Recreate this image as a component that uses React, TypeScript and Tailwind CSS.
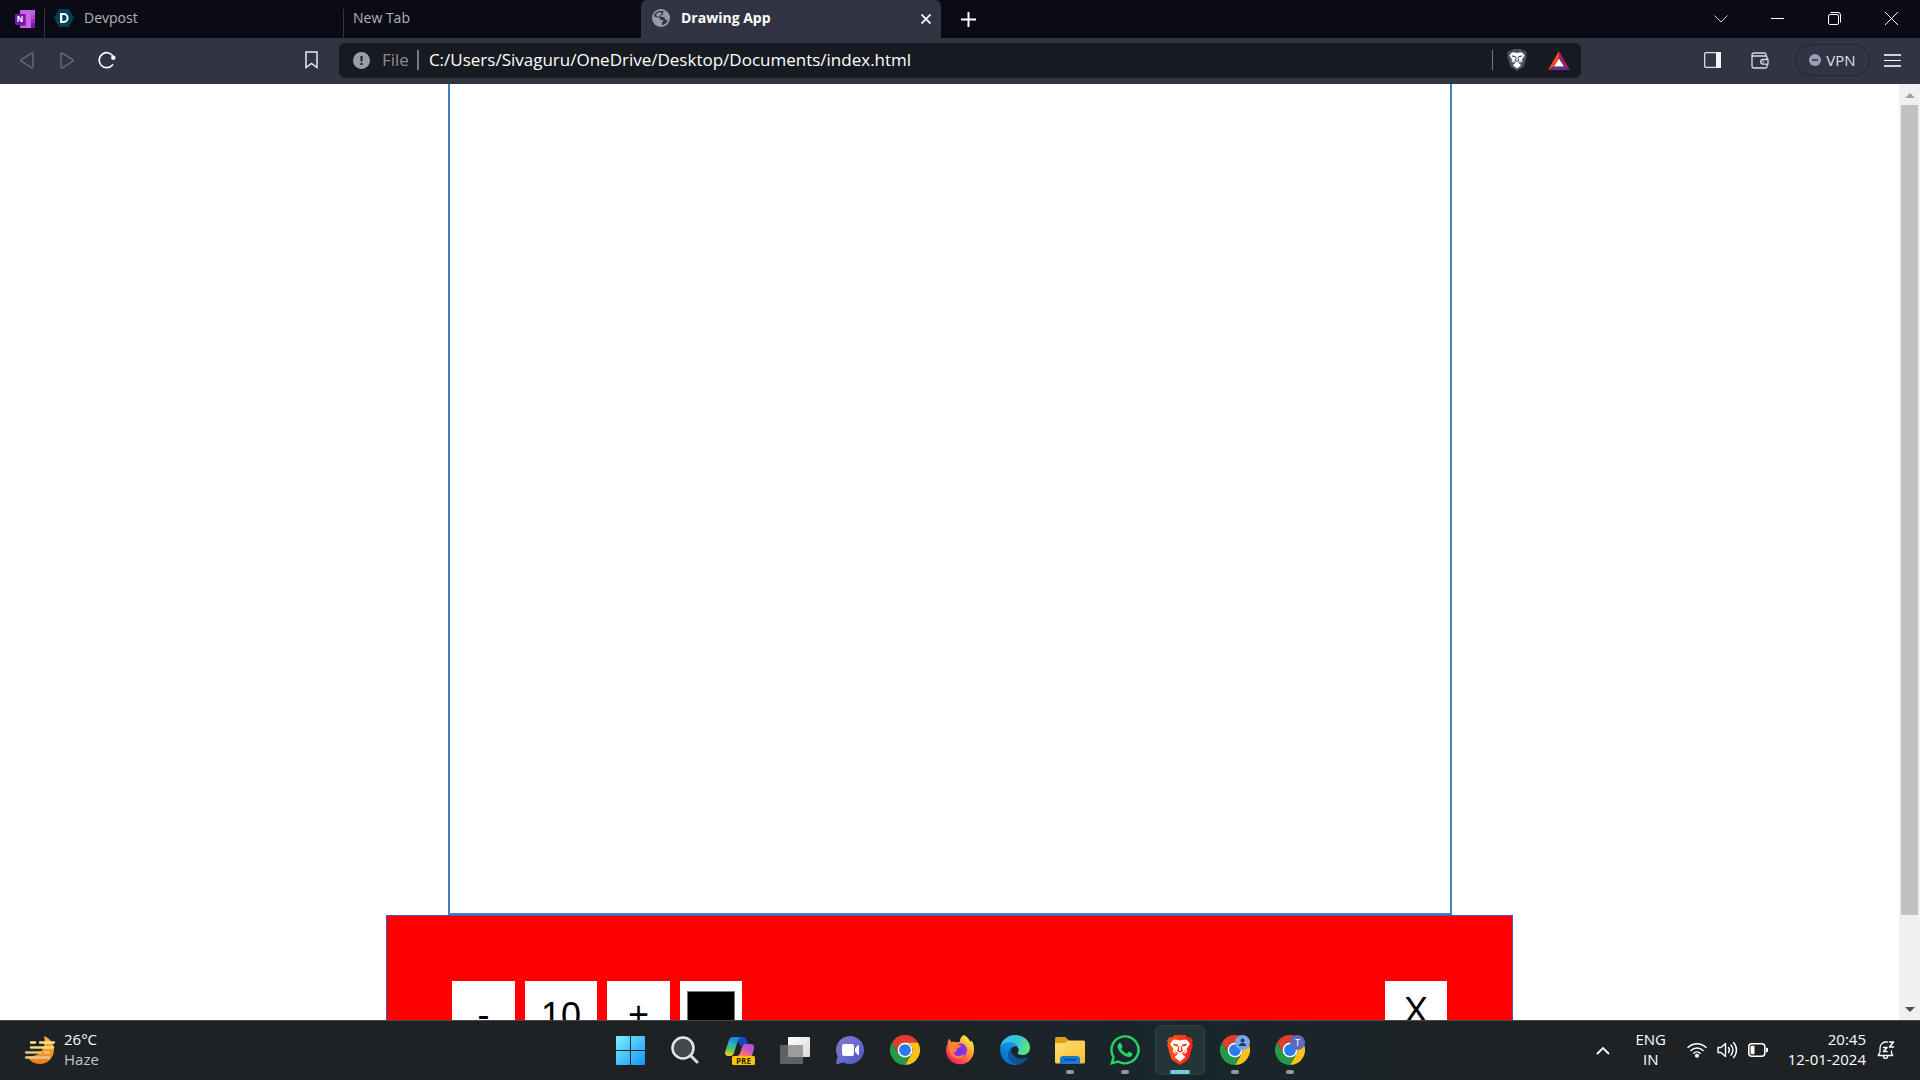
import React from "react";
import { FaWhatsapp } from "react-icons/fa";

function OneNoteIcon() {
  return (
    <svg width="20" height="18" viewBox="0 0 20 18">
      <rect x="5" y="0" width="15" height="18" rx="1" fill="#ca64ea" />
      <rect x="16" y="0" width="4" height="5" fill="#c45be8" />
      <rect x="16" y="5" width="4" height="4" fill="#ae4bd5" />
      <rect x="16" y="9" width="4" height="4" fill="#9332bf" />
      <rect x="16" y="13" width="4" height="5" fill="#7719aa" />
      <rect x="5" y="4" width="6" height="12" fill="#8a2fae" />
      <rect x="0" y="4" width="10" height="11" rx="1" fill="#7719aa" />
      <text x="5" y="12" textAnchor="middle" fontSize="8" fontWeight="700" fill="#fff" fontFamily="Open Sans, sans-serif">N</text>
    </svg>
  );
}

function DevpostIcon() {
  return (
    <svg width="20" height="18" viewBox="0 0 20 18">
      <path d="M5 0h10l5 9-5 9H5L0 9z" fill="#003e54" />
      <path d="M6 4h3.600a5 5 0 0 1 0 10H6zM8.300 6v6h1.300a3 3 0 0 0 0-6z" fill="#fff" fillRule="evenodd" />
    </svg>
  );
}

function GlobeIcon() {
  return (
    <svg width="18" height="18" viewBox="0 0 18 18">
      <circle cx="9" cy="9" r="9" fill="#9a9ca5" />
      <path d="M8 2C5 2 2.500 4 2 7.500L6 8.500c2 .3 2.500 1 2.500 2.500l3 .2c0 1.300-1 1.600-1.500 2l-.3 2.800c2.500 0 5-1.600 6-4.500L13 10.500 12.500 8H9V6h2V3.500l1.500-.8C11 2 9 2 8 2z" fill="#323443" />
      <path d="M5.500 3.500h4V5L8 6.500 7 8 4 6.500zM12 5l3 1-1 2-2.500-1z" fill="#9a9ca5" />
    </svg>
  );
}

function ChromeIcon({ badge }: { badge?: "person" | "letter" }) {
  return (
    <svg width="30" height="30" viewBox="0 0 24 24">
      <path d="M12 6H22.4A12 12 0 0 0 1.6 6L6.8 15A6 6 0 0 1 12 6Z" fill="#e33b2e" />
      <path d="M12 6H22.4A12 12 0 0 1 12 24L17.2 15A6 6 0 0 0 12 6Z" fill="#fcc21b" />
      <path d="M1.6 6A12 12 0 0 0 12 24L17.2 15A6 6 0 0 1 6.8 15Z" fill="#229a48" />
      <circle cx="12" cy="12" r="6" fill="#fff" />
      <circle cx="12" cy="12" r="4.7" fill="#2a7af0" />
      {badge === "person" && (
        <g>
          <circle cx="18" cy="6" r="6" fill="#7ba7e8" />
          <circle cx="18" cy="4.400" r="1.600" fill="#1c3a66" />
          <path d="M15 8.800c0-1.700 1.400-2.400 3-2.400s3 .7 3 2.400z" fill="#1c3a66" />
        </g>
      )}
      {badge === "letter" && (
        <g>
          <circle cx="18" cy="6" r="6" fill="#5c6bc0" />
          <text x="18" y="8.600" textAnchor="middle" fontSize="7" fill="#fff" fontFamily="Roboto, sans-serif">T</text>
        </g>
      )}
    </svg>
  );
}

function WindowsIcon() {
  return (
    <svg width="29" height="29" viewBox="0 0 29 29">
      <defs>
        <linearGradient id="win" x1="0" y1="0" x2="29" y2="29" gradientUnits="userSpaceOnUse">
          <stop offset="0" stopColor="#7af0ff" />
          <stop offset="1" stopColor="#1296f5" />
        </linearGradient>
      </defs>
      <path d="M1 0h13v14H0V1a1 1 0 0 1 1-1zM15 0h13a1 1 0 0 1 1 1v13H15zM0 15h14v14H1a1 1 0 0 1-1-1zM15 15h14v13a1 1 0 0 1-1 1H15z" fill="url(#win)" />
    </svg>
  );
}

function SearchIcon() {
  return (
    <svg width="28" height="28" viewBox="0 0 28 28">
      <path d="M19 19l7 7" stroke="#d9dcde" strokeWidth="3" strokeLinecap="round" />
      <circle cx="12" cy="12" r="10.500" fill="#43484b" stroke="#e4e6e7" strokeWidth="2.500" />
    </svg>
  );
}

function CopilotIcon() {
  return (
    <svg width="30" height="29" viewBox="0 0 30 29">
      <defs>
        <linearGradient id="cpa" x1="0.500" y1="0" x2="0.300" y2="1">
          <stop offset="0" stopColor="#1587e8" />
          <stop offset="0.400" stopColor="#2fb1b8" />
          <stop offset="0.700" stopColor="#6cc04a" />
          <stop offset="1" stopColor="#f5d02b" />
        </linearGradient>
        <linearGradient id="cpb" x1="0.800" y1="0" x2="0.200" y2="1">
          <stop offset="0" stopColor="#a24ff0" />
          <stop offset="0.500" stopColor="#d658b4" />
          <stop offset="1" stopColor="#ff8a4c" />
        </linearGradient>
      </defs>
      <path d="M9 1h9c2 0 3 1 3.600 3l1.200 4h-3c-2 0-3.200.8-3.800 3L14 7z" fill="#124bc4" />
      <path d="M8 1h8c-2 1-3 3-3.600 5L9 17c-.6 2-2 3-4 3H3c-2.500 0-3.500-2-2.700-4.500L4 4c.6-2 2-3 4-3z" fill="url(#cpa)" />
      <path d="M20 8h6c2.500 0 3.600 2 3 4.500L27 20H12c2-.5 2.800-2 3.200-3.500L17.500 10c.5-1.300 1.300-2 2.500-2z" fill="url(#cpb)" />
      <rect x="7" y="20" width="23" height="9" rx="1.500" fill="#ffc505" />
      <text x="18.500" y="27.500" textAnchor="middle" fontSize="8" fontWeight="700" fill="#2a2208" fontFamily="Open Sans, sans-serif">PRE</text>
    </svg>
  );
}

function TaskViewIcon() {
  return (
    <svg width="30" height="27" viewBox="0 0 30 27">
      <defs>
        <linearGradient id="tv" x1="0" y1="0" x2="1" y2="1">
          <stop offset="0" stopColor="#fff" />
          <stop offset="1" stopColor="#d8d8d8" />
        </linearGradient>
      </defs>
      <rect x="0" y="8" width="23" height="19" rx="1" fill="#5f6263" />
      <rect x="8" y="0" width="22" height="20" rx="1" fill="url(#tv)" />
      <path d="M8 8h15v12H8z" fill="#9b9c9c" />
    </svg>
  );
}

function ChatIcon() {
  return (
    <svg width="28" height="28" viewBox="0 0 28 28">
      <defs>
        <linearGradient id="chat" x1="0" y1="0" x2="1" y2="1">
          <stop offset="0" stopColor="#9a72b8" />
          <stop offset="0.400" stopColor="#6a6fd0" />
          <stop offset="1" stopColor="#4f56c4" />
        </linearGradient>
      </defs>
      <path d="M14 0a14 14 0 1 1-6.500 26.400L1.500 28c-.9.200-1.600-.5-1.300-1.400L1.600 20.500A14 14 0 0 1 14 0z" fill="url(#chat)" />
      <rect x="6" y="8" width="12" height="12" rx="2" fill="#fff" />
      <path d="M19 12.500l3-3.500h1v10h-1l-3-3.500z" fill="#fff" />
    </svg>
  );
}

function FirefoxIcon() {
  return (
    <svg width="30" height="30" viewBox="0 0 30 30">
      <defs>
        <linearGradient id="ffx" x1="26" y1="3" x2="5" y2="27" gradientUnits="userSpaceOnUse">
          <stop offset="0" stopColor="#fff44f" />
          <stop offset="0.300" stopColor="#ffb02e" />
          <stop offset="0.600" stopColor="#ff6a3d" />
          <stop offset="1" stopColor="#f0186e" />
        </linearGradient>
        <radialGradient id="ffc">
          <stop offset="0" stopColor="#5a3af0" />
          <stop offset="1" stopColor="#a42ee0" />
        </radialGradient>
      </defs>
      <path d="M19 0c3.500 1.500 5 4.500 6.500 7l1-1.500c1.800 2.500 2.700 6 2.500 9.500A14 14 0 1 1 2.500 9C2.700 6.500 3.300 5 4.500 3.500L6 7c1-.4 2.500-.4 4 0 1.800.3 3.500.3 5-.2C14.500 4 16.500 1 19 0z" fill="url(#ffx)" />
      <path d="M13.500 8.500a7 7 0 1 1-5 9l-.5-3 4-2z" fill="url(#ffc)" />
      <path d="M3.500 9.500c3-2 6 .2 9 .6 1.500.3 3.500.2 3.500 1.200s-3 1.300-4 2.300c-.8 1 0 2.500-1.200 3.200-1 .6-2 .3-2.300-.4-.3 3 2 4.700 4.800 4.700 3 0 4.200-2 6-1.600-1 2.500-3.500 4-6.500 4C8 23.500 3 19 3.500 9.500z" fill="#ff7f36" />
    </svg>
  );
}

function EdgeIcon() {
  return (
    <svg width="30" height="30" viewBox="0 0 256 256">
      <defs>
        <linearGradient id="ed1" x1="60" y1="170" x2="236" y2="180" gradientUnits="userSpaceOnUse">
          <stop offset="0" stopColor="#0c59a4" />
          <stop offset="1" stopColor="#114a8b" />
        </linearGradient>
        <linearGradient id="ed2" x1="150" y1="80" x2="40" y2="230" gradientUnits="userSpaceOnUse">
          <stop offset="0" stopColor="#1b9de2" />
          <stop offset="0.500" stopColor="#1383d8" />
          <stop offset="1" stopColor="#0a6cc8" />
        </linearGradient>
        <linearGradient id="ed3" x1="20" y1="40" x2="250" y2="130" gradientUnits="userSpaceOnUse">
          <stop offset="0" stopColor="#35c1f1" />
          <stop offset="0.500" stopColor="#36c6d7" />
          <stop offset="1" stopColor="#66eb6e" />
        </linearGradient>
      </defs>
      <path fill="url(#ed1)" d="M231.05 190.54c-3.37 1.76-6.86 3.3-10.44 4.6a101.2 101.2 0 0 1-35.62 6.33c-46.94 0-87.83-32.29-87.83-73.72.13-11.31 6.35-21.67 16.26-27.13-42.46 1.79-53.37 46.03-53.37 71.95 0 73.28 67.54 80.71 82.09 80.71 7.85 0 19.69-2.28 26.8-4.52l1.3-.44a128.43 128.43 0 0 0 66.62-52.8 4 4 0 0 0-5.81-4.98z" />
      <path fill="url(#ed2)" d="M105.73 241.42a79.2 79.2 0 0 1-22.74-21.34A80.72 80.72 0 0 1 113.4 100.62c3.15-1.48 8.53-4.16 15.68-4.03a32.35 32.35 0 0 1 25.69 13.02 31.88 31.88 0 0 1 6.36 18.66c0-.21 24.46-79.6-80-79.6-43.9 0-80 41.65-80 78.21a130.15 130.15 0 0 0 12.11 56.01 128 128 0 0 0 156.38 67.11 75.55 75.55 0 0 1-62.78-8.58z" />
      <path fill="url(#ed3)" d="M152.33 148.86c-.81 1.05-3.3 2.5-3.3 5.66 0 2.61 1.7 5.13 4.72 7.23 14.38 10 41.49 8.68 41.56 8.68a59.56 59.56 0 0 0 30.27-8.35A61.38 61.38 0 0 0 256 109.18c.26-22.41-8-37.31-11.34-43.91C223.46 23.84 177.72 0 128 0A128 128 0 0 0 0 126.2c.48-36.54 36.8-66.05 80-66.05 3.5 0 23.46.34 42 10.07 16.34 8.58 24.9 18.94 30.85 29.21 6.18 10.67 7.28 24.15 7.28 29.52 0 5.37-2.74 13.33-7.8 19.91z" />
    </svg>
  );
}

function FolderIcon() {
  return (
    <svg width="30" height="27" viewBox="0 0 30 27">
      <defs>
        <linearGradient id="fold" x1="0" y1="0" x2="1" y2="1">
          <stop offset="0" stopColor="#ffdf72" />
          <stop offset="1" stopColor="#f9bf2c" />
        </linearGradient>
      </defs>
      <path d="M0 1.500C0 .7.700 0 1.500 0h8c.6 0 1 .2 1.500.6L14 3.500v4H0z" fill="#dda10f" />
      <path d="M0 6h10l3-2.500h15.500c.8 0 1.500.7 1.500 1.500v20c0 .8-.7 1.500-1.500 1.500h-27C.7 26.500 0 25.800 0 25z" fill="url(#fold)" />
      <path d="M5 27v-4.500c0-2 1-3.500 3-3.500h14c2 0 3 1.500 3 3.500V27z" fill="#1679cf" />
      <rect x="9" y="22" width="12" height="1.500" rx="0.700" fill="#0b4a8c" />
    </svg>
  );
}

function BraveIcon({ muted }: { muted?: boolean }) {
  const fill = muted ? "#4a4d63" : "url(#brave)";
  return (
    <svg width={muted ? 20 : 26} height={muted ? 22 : 30} viewBox="0 0 26 30" preserveAspectRatio="none">
      <defs>
        <linearGradient id="brave" x1="0" y1="0" x2="26" y2="0" gradientUnits="userSpaceOnUse">
          <stop offset="0" stopColor="#fb5a1c" />
          <stop offset="1" stopColor="#fb1e10" />
        </linearGradient>
      </defs>
      <path d="M7.500 0h11l2.300 2.500 2.700-.3L26 5.500l-1 2.300.7 2.200-3.500 12.500c-.5 1.500-1.500 2.500-3 3.500L13 30l-6.200-4c-1.500-1-2.500-2-3-3.500L.3 10 1 7.800 0 5.500l2.500-3.300 2.700.3z" fill={fill} />
      <path d="M8.500 4.500l4.500 1 4.500-1L20 5l3 4-3.500 5 .8 2.200-1.300 1.800-3.500 1.500L18.500 22 13 26.500 7.500 22l3-2.500L7 18l-1.300-1.800.8-2.200L3 9l3-4z" fill="#fff" />
      <path d="M6 8.500l5.500 1.300-.8 1.700-3.700-.8zM20 8.500l-5.500 1.300.8 1.700 3.700-.8zM11.500 11h.8l-.4 4.500 1.100.7 1.100-.7-.4-4.500h.8l1.500 5-3 1.700-3-1.700zM6.500 14.500l3 2.500 2.500 2.500-2.500-.7zM19.500 14.500l-3 2.500-2.500 2.500 2.500-.7z" fill={fill} />
    </svg>
  );
}

function WeatherIcon() {
  return (
    <svg width="30" height="28" viewBox="0 0 30 28">
      <defs>
        <linearGradient id="moon" x1="0" y1="0" x2="0" y2="1">
          <stop offset="0" stopColor="#f9b43a" />
          <stop offset="1" stopColor="#ef7d16" />
        </linearGradient>
      </defs>
      <path d="M19 0c6 2.500 10 7.500 10 13.500C29 22 22.500 28 15 28c-6 0-10.500-3-12.500-8C14 22 22 12 19 0z" fill="url(#moon)" />
      <g strokeLinecap="round" strokeWidth="2.400">
        <path d="M6 6.500h4M15 6.500h14" stroke="#fbe08c" />
        <path d="M6 11.500h22" stroke="#fad67a" />
        <path d="M1 16.500h15M20 16.500h4" stroke="#e9c27b" />
        <path d="M1 21.500h23" stroke="#e2c896" />
      </g>
    </svg>
  );
}

const tabText = "text-sm leading-5 whitespace-nowrap";

function TabStrip() {
  return (
    <header className="flex h-[38px] shrink-0 bg-[#0b0b15] text-[#b3b4b9]">
      <nav className="flex min-w-0" aria-label="Tabs">
        <button aria-label="OneNote" className="flex w-11 items-center pl-[15px]">
          <OneNoteIcon />
        </button>
        <div className="mt-[9px] w-px shrink-0 bg-[#36363c]" />
        <button className="flex w-[298px] items-center gap-[10px] pb-[2px] pl-[9px]">
          <DevpostIcon />
          <span className={tabText}>Devpost</span>
        </button>
        <div className="mt-[9px] w-px shrink-0 bg-[#36363c]" />
        <button className="flex w-[297px] items-center pb-[2px] pl-[9px]">
          <span className={tabText}>New Tab</span>
        </button>
        <div className="flex w-[300px] items-center rounded-t-md bg-[#323443] pr-[7px] pl-[11px] text-white">
          <button className="flex flex-1 items-center gap-[11px] pb-[2px]">
            <GlobeIcon />
            <span className="text-sm leading-5 font-bold whitespace-nowrap">Drawing App</span>
          </button>
          <button aria-label="Close tab" className="flex h-5 w-4 items-center justify-center">
            <svg width="10" height="10" viewBox="0 0 10 10" stroke="#fff" strokeWidth="1.800">
              <path d="M0.500 0.500l9 9M9.500 0.500l-9 9" />
            </svg>
          </button>
        </div>
        <button aria-label="New tab" className="flex w-[55px] items-center justify-center">
          <svg width="15" height="15" viewBox="0 0 15 15" stroke="#fff" strokeWidth="2">
            <path d="M7.500 0v15M0 7.500h15" />
          </svg>
        </button>
      </nav>
      <div className="ml-auto flex pb-px">
        <button aria-label="Search tabs" className="flex w-[57px] items-center justify-center">
          <svg width="14" height="8" viewBox="0 0 14 8" fill="none" stroke="#d0d0d3"><path d="M.5.5L7 7l6.500-6.500" /></svg>
        </button>
        <button aria-label="Minimize" className="flex w-[57px] items-center justify-center">
          <span className="h-px w-[13px] bg-white" />
        </button>
        <button aria-label="Restore" className="flex w-[57px] items-center justify-center">
          <svg width="13" height="13" viewBox="0 0 13 13" fill="none" stroke="#fff">
            <rect x="0.500" y="2.500" width="10" height="10" rx="1.500" />
            <path d="M2.500.5H10A2.500 2.500 0 0 1 12.500 3v7.500" />
          </svg>
        </button>
        <button aria-label="Close" className="flex w-[57px] items-center justify-center">
          <svg width="13" height="13" viewBox="0 0 13 13" stroke="#fff"><path d="M0 0l13 13M13 0L0 13" /></svg>
        </button>
      </div>
    </header>
  );
}

const toolSlot = "flex h-10 w-10 items-center justify-center";

function Toolbar() {
  return (
    <div className="flex h-[46px] shrink-0 items-center bg-[#323443] pb-[2px]">
      <div className="flex w-[339px] shrink-0 items-center pr-2 pl-[7px]">
        <button aria-label="Back" className={toolSlot}>
          <svg width="14" height="17" viewBox="0 0 14 17" fill="none" stroke="#666874" strokeWidth="1.500" strokeLinejoin="round">
            <path d="M13 2v13c0 1-1 1.400-1.800.7L1.200 9.200c-.5-.4-.5-1 0-1.400l10-6.500C12 .7 13 1 13 2z" />
          </svg>
        </button>
        <button aria-label="Forward" className={toolSlot}>
          <svg width="14" height="17" viewBox="0 0 14 17" fill="none" stroke="#666874" strokeWidth="1.500" strokeLinejoin="round">
            <path d="M1 2v13c0 1 1 1.400 1.800.7l10-6.500c.5-.4.5-1 0-1.400l-10-6.500C2 .7 1 1 1 2z" />
          </svg>
        </button>
        <button aria-label="Reload" className={toolSlot}>
          <svg width="18" height="18" viewBox="0 0 18 18" fill="none" stroke="#fff" strokeWidth="1.700">
            <path d="M14.500 14A7.500 7.500 0 1 1 15.500 6" strokeLinecap="round" />
            <circle cx="15.300" cy="6.800" r="2.200" fill="#fff" stroke="none" />
          </svg>
        </button>
        <button aria-label="Bookmark" className="ml-auto flex h-10 w-10 items-center justify-center">
          <svg width="13" height="18" viewBox="0 0 13 18" fill="none" stroke="#e8e8ea" strokeWidth="1.500">
            <path d="M1 1h11v15.500l-5.500-4-5.500 4z" />
          </svg>
        </button>
      </div>
      <div className="flex h-[35px] min-w-0 flex-1 items-center rounded-md bg-[#181a21] pr-[11px] pl-[14px]">
        <svg width="17" height="17" viewBox="0 0 17 17" className="shrink-0">
          <circle cx="8.500" cy="8.500" r="8.500" fill="#9a9ca8" />
          <path d="M7.500 4h2v5.500h-2zM7.500 11h2v2h-2z" fill="#181a21" />
        </svg>
        <label htmlFor="url" className="ml-3 text-[17px] leading-6 text-[#8b8d96]">File</label>
        <div className="mr-[10px] ml-2 h-5 w-[2px] shrink-0 bg-[#77797f]" />
        <input
          id="url"
          type="text"
          defaultValue="C:/Users/Sivaguru/OneDrive/Desktop/Documents/index.html"
          className="h-6 min-w-0 flex-1 bg-transparent text-[17px] leading-6 text-white outline-none"
        />
        <div className="h-5 w-px bg-[#77797f]" />
        <button aria-label="Brave Shields" className="ml-[14px] flex h-[22px] w-[20px] items-center justify-center">
          <BraveIcon muted />
        </button>
        <button aria-label="Brave Rewards" className="ml-[21px] flex h-5 w-[22px] items-center justify-center">
          <svg width="22" height="19" viewBox="0 0 22 19">
            <path d="M11 0L0 19l6-3.500 5-8.500z" fill="#ff4724" />
            <path d="M11 0l11 19-6-3.500L11 7z" fill="#9e1f63" />
            <path d="M0 19h22l-6-3.500H6z" fill="#662d91" />
            <path d="M11 7.500l5 8H6z" fill="#fff" />
          </svg>
        </button>
      </div>
      <div className="flex w-[339px] shrink-0 items-center justify-end pr-2">
        <button aria-label="Sidebar" className={toolSlot}>
          <svg width="17" height="16" viewBox="0 0 17 16">
            <rect x="0.700" y="0.700" width="15.600" height="14.600" rx="1" fill="none" stroke="#dcdde0" strokeWidth="1.300" />
            <path d="M12 0h5v16h-5z" fill="#f4f4f5" />
          </svg>
        </button>
        <button aria-label="Wallet" className="ml-2 flex h-10 w-10 items-center justify-center">
          <svg width="18" height="17" viewBox="0 0 18 17" fill="none" stroke="#dcdde0" strokeWidth="1.300">
            <path d="M15 4V2.500C15 1.500 14.500 1 13.500 1H3a2 2 0 0 0-2 2v11a2 2 0 0 0 2 2h11.500a1.500 1.500 0 0 0 1.500-1.500V12M1.300 4H14.500A1.500 1.500 0 0 1 16 5.500V7" />
            <path d="M17 7.500h-5a2.300 2.300 0 0 0 0 4.600h5zM11.500 9.800h1.600" />
          </svg>
        </button>
        <button className="mr-[2px] ml-[15px] flex h-8 w-[75px] items-center justify-center gap-[5px] rounded-full border border-[#23252f] text-[15px] text-[#dfe0e4]">
          <svg width="12" height="12" viewBox="0 0 12 12">
            <circle cx="6" cy="6" r="6" fill="#9a9db5" />
            <path d="M3 5.200h6v1.600H3z" fill="#323443" />
          </svg>
          VPN
        </button>
        <button aria-label="Menu" className={toolSlot}>
          <span className="flex w-[17px] flex-col gap-[4px]">
            <span className="h-[2px] bg-[#d2d3d7]" />
            <span className="h-[1px] bg-[#ffffff]" />
            <span className="h-[2px] bg-[#d2d3d7]" />
          </span>
        </button>
      </div>
    </div>
  );
}

function PaintPage() {
  return (
    <main className="flex min-h-0 flex-1 bg-white">
      <div className="flex min-w-0 flex-1 flex-col items-center">
        <canvas aria-label="Drawing area" className="min-h-0 w-[1004px] max-w-full flex-1 border-2 border-t-0 border-[#4682b4]" />
        <div className="h-[105px] w-[1127px] max-w-full shrink-0 overflow-hidden border border-b-0 border-[#4f52c8] bg-[red] px-[65px] pt-[65px] font-['Liberation_Sans',Arial,sans-serif] text-black">
          <div className="flex items-start gap-[10px]">
            <button className="h-[63px] w-[63px] bg-white pt-1 text-4xl leading-10">-</button>
            <output className="h-[63px] w-[72px] bg-white pt-[15px] text-center text-4xl leading-10">10</output>
            <button className="h-[63px] w-[63px] bg-white pt-1 text-4xl leading-10">+</button>
            <input
              type="color"
              aria-label="Brush colour"
              defaultValue="#000000"
              className="h-[63px] w-[62px] bg-white px-[7px] py-[10px] [&::-webkit-color-swatch]:rounded-none [&::-webkit-color-swatch]:border [&::-webkit-color-swatch]:border-[#777777] [&::-webkit-color-swatch-wrapper]:p-0"
            />
            <button className="ml-auto h-[63px] w-[62px] bg-white pb-[3px] text-4xl leading-10">X</button>
          </div>
        </div>
      </div>
      <div className="flex w-[21px] flex-col items-center bg-[#f0f0f0]">
        <div className="flex h-[21px] items-center justify-center pt-[2px]">
          <svg width="10" height="5" viewBox="0 0 10 5"><path d="M5 0l5 5H0z" fill="#a3a3a3" /></svg>
        </div>
        <div className="w-[17px] flex-1 bg-[#c1c1c1]" />
        <div className="flex h-[105px] items-end pb-[8px]">
          <svg width="10" height="5" viewBox="0 0 10 5"><path d="M0 0h10L5 5z" fill="#505050" /></svg>
        </div>
      </div>
    </main>
  );
}

const taskApps: { name: string; icon: React.ReactNode; state?: "open" | "active" }[] = [
  { name: "Start", icon: <WindowsIcon /> },
  { name: "Search", icon: <SearchIcon /> },
  { name: "Copilot", icon: <CopilotIcon /> },
  { name: "Task view", icon: <TaskViewIcon /> },
  { name: "Chat", icon: <ChatIcon /> },
  { name: "Chrome", icon: <ChromeIcon /> },
  { name: "Firefox", icon: <FirefoxIcon /> },
  { name: "Edge", icon: <EdgeIcon /> },
  { name: "File Explorer", icon: <FolderIcon />, state: "open" },
  { name: "WhatsApp", icon: <FaWhatsapp size={34} color="#25d366" />, state: "open" },
  { name: "Brave", icon: <BraveIcon />, state: "active" },
  { name: "Chrome profile 1", icon: <ChromeIcon badge="person" />, state: "open" },
  { name: "Chrome profile 2", icon: <ChromeIcon badge="letter" />, state: "open" },
];

function Taskbar() {
  return (
    <footer className="flex h-[60px] shrink-0 items-center border-t border-[#45494b] bg-linear-to-r from-[#1e2225] from-45% via-[#18262c] via-62% to-[#1e2225] to-78% px-[25px] pb-px text-[15px] leading-5 text-white">
      <div className="flex flex-1 items-center">
        <button aria-label="Weather" className="flex items-center gap-[9px] text-left">
          <WeatherIcon />
          <span className="flex flex-col pb-[3px]">
            <span>26°C</span>
            <span className="text-[#c4c6c8]">Haze</span>
          </span>
        </button>
      </div>
      <nav aria-label="Apps" className="flex gap-[5px]">
        {taskApps.map((app) => (
          <button
            key={app.name}
            aria-label={app.name}
            className={
              app.state === "active"
                ? "relative flex h-[50px] w-[50px] items-center justify-center rounded-md border border-[#31403f] bg-[#253437]"
                : "relative flex h-[50px] w-[50px] items-center justify-center"
            }
          >
            {app.icon}
            {app.state === "open" && <span className="absolute bottom-[1px] h-1 w-2 rounded-full bg-[#949a9c]" />}
            {app.state === "active" && <span className="absolute bottom-0 h-1 w-5 rounded-full bg-[#6fd0dc]" />}
          </button>
        ))}
      </nav>
      <div className="flex flex-1 items-center justify-end">
        <button aria-label="Hidden icons" className="mr-5 flex h-10 w-6 items-center justify-center">
          <svg width="14" height="9" viewBox="0 0 14 9" fill="none" stroke="#fff" strokeWidth="1.800"><path d="M1 8l6-6 6 6" /></svg>
        </button>
        <button className="mr-5 w-8 pb-[3px] text-center">ENG<br />IN</button>
        <button aria-label="Network, volume and battery" className="mr-5 flex items-center gap-[10px]">
          <svg width="20" height="16" viewBox="0 0 20 16" fill="none" stroke="#fff" strokeWidth="1.500" strokeLinecap="round">
            <path d="M1 5.500a12.500 12.500 0 0 1 18 0M4 8.500a8.500 8.500 0 0 1 12 0M6.800 11.200a4.600 4.600 0 0 1 6.400 0" />
            <circle cx="10" cy="13.800" r="1.300" fill="#fff" />
          </svg>
          <svg width="21" height="18" viewBox="0 0 21 18" fill="none" stroke="#fff" strokeWidth="1.400" strokeLinecap="round" strokeLinejoin="round">
            <path d="M1 6.500h3L8.500 2.500v13L4 11.500H1zM11.500 6.500a4 4 0 0 1 0 5M14 4a7.500 7.500 0 0 1 0 10" />
            <path d="M16.500 1.500a11 11 0 0 1 0 15" />
          </svg>
          <svg width="20" height="14" viewBox="0 0 20 14" fill="none">
            <rect x="0.800" y="0.800" width="16" height="12.400" rx="3" stroke="#fff" strokeWidth="1.500" />
            <rect x="2.500" y="2.700" width="4" height="8.600" rx="1" fill="#fff" />
            <path d="M18 4.500l2 .8v3.400l-2 .8z" fill="#fff" />
          </svg>
        </button>
        <button className="mr-[11px] pb-[3px] text-right">20:45<br />12-01-2024</button>
        <button aria-label="Notifications">
          <svg width="18" height="18" viewBox="0 0 18 18" fill="none" stroke="#fff" strokeWidth="1.300" strokeLinecap="round" strokeLinejoin="round">
            <path d="M10.500 1.200A6 6 0 0 0 3 7v4l-1.800 3.500h14.600L14.500 12v-2M6.500 15.500a2 2 0 0 0 4 0" />
            <path d="M6.500 6.500h3.500l-3.500 4H10M12.500 1h4l-4 5h4" strokeWidth="1.500" />
          </svg>
        </button>
      </div>
    </footer>
  );
}

export default function App() {
  return (
    <div className="flex h-screen flex-col overflow-hidden font-['Open_Sans','Noto_Sans',sans-serif]">
      <TabStrip />
      <Toolbar />
      <PaintPage />
      <Taskbar />
    </div>
  );
}
